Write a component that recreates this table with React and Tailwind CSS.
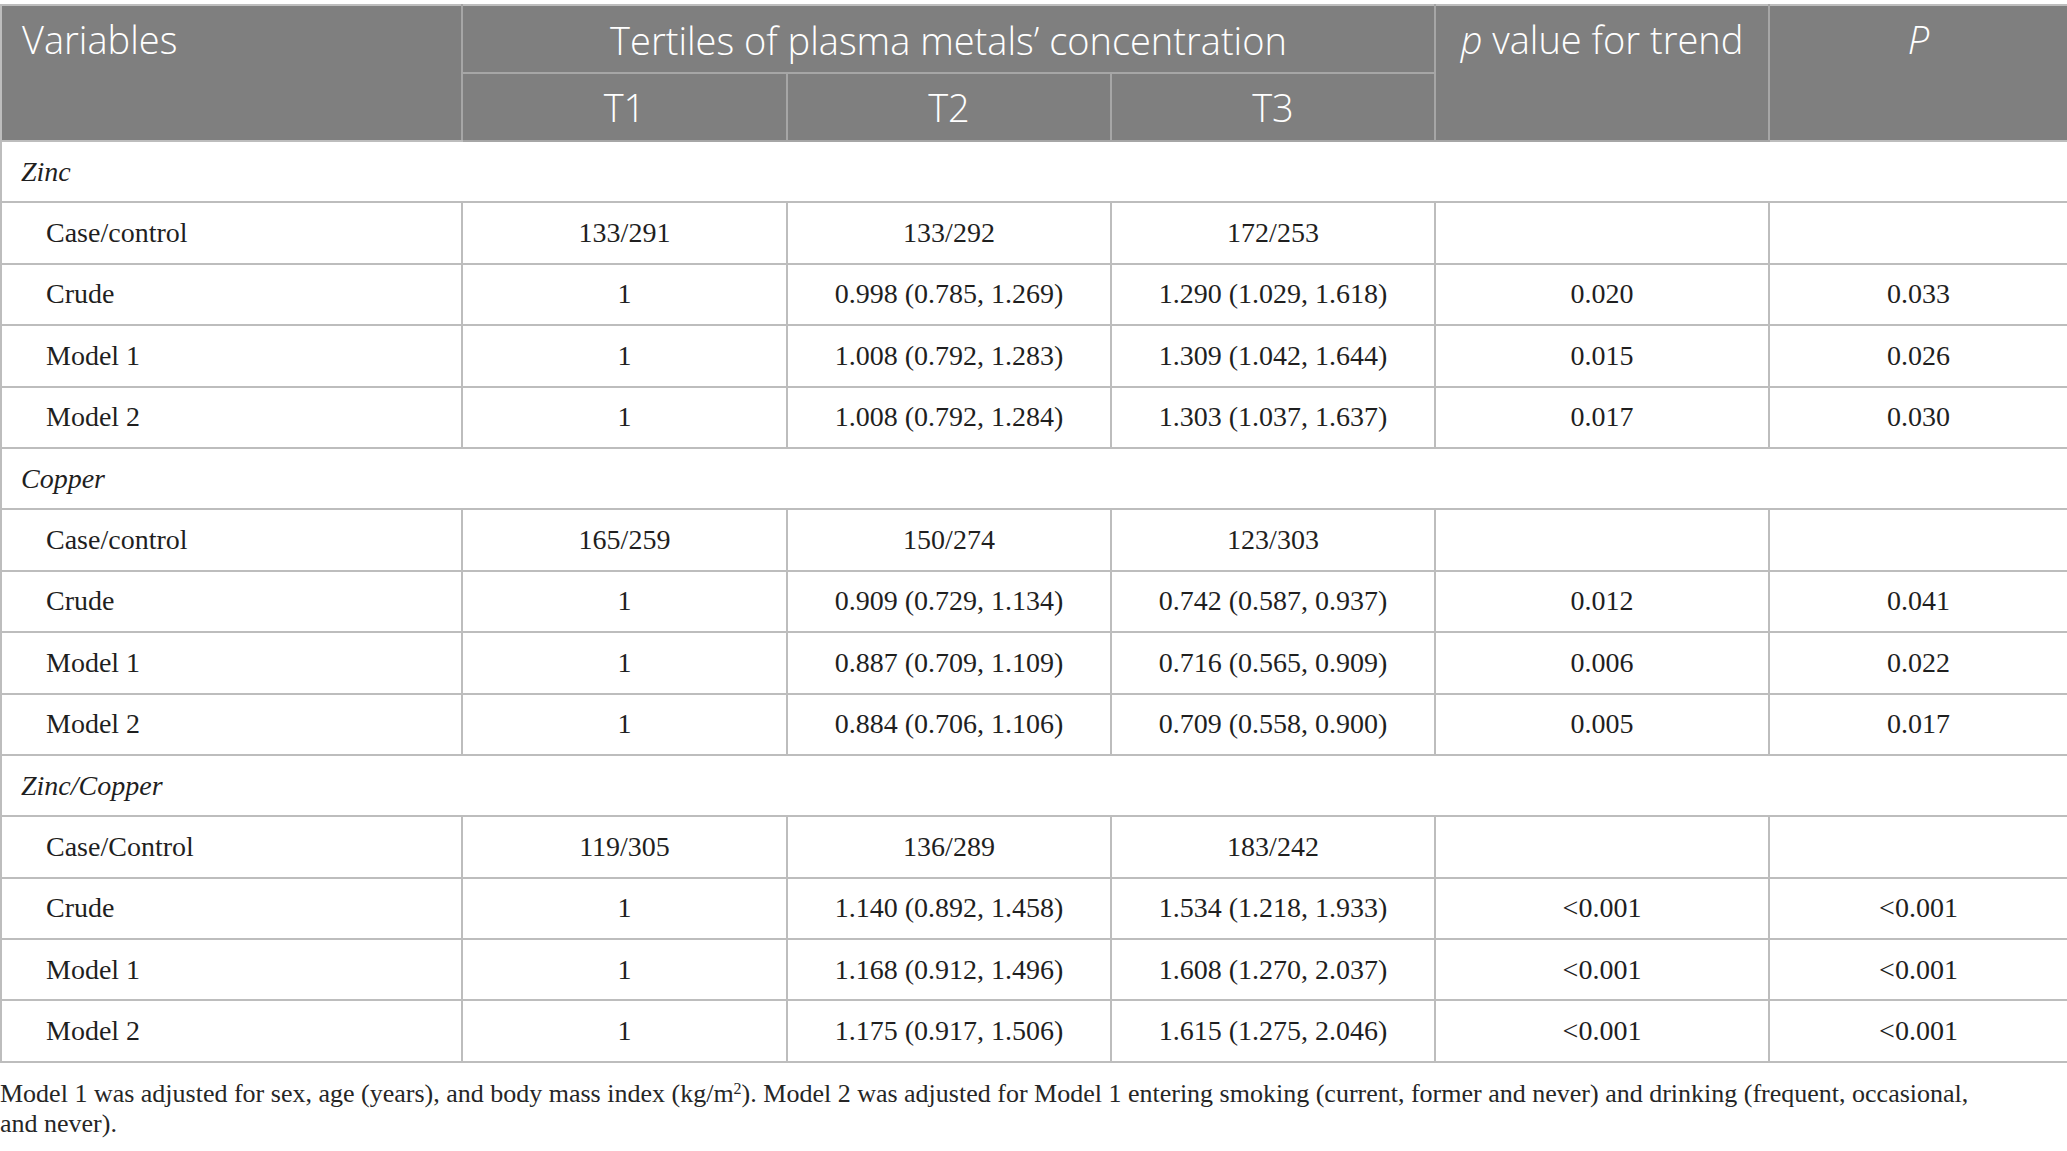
import React from 'react';

const sections = [
  {
    name: 'Zinc',
    rows: [
      ['Case/control', '133/291', '133/292', '172/253', '', ''],
      ['Crude', '1', '0.998 (0.785, 1.269)', '1.290 (1.029, 1.618)', '0.020', '0.033'],
      ['Model 1', '1', '1.008 (0.792, 1.283)', '1.309 (1.042, 1.644)', '0.015', '0.026'],
      ['Model 2', '1', '1.008 (0.792, 1.284)', '1.303 (1.037, 1.637)', '0.017', '0.030'],
    ],
  },
  {
    name: 'Copper',
    rows: [
      ['Case/control', '165/259', '150/274', '123/303', '', ''],
      ['Crude', '1', '0.909 (0.729, 1.134)', '0.742 (0.587, 0.937)', '0.012', '0.041'],
      ['Model 1', '1', '0.887 (0.709, 1.109)', '0.716 (0.565, 0.909)', '0.006', '0.022'],
      ['Model 2', '1', '0.884 (0.706, 1.106)', '0.709 (0.558, 0.900)', '0.005', '0.017'],
    ],
  },
  {
    name: 'Zinc/Copper',
    rows: [
      ['Case/Control', '119/305', '136/289', '183/242', '', ''],
      ['Crude', '1', '1.140 (0.892, 1.458)', '1.534 (1.218, 1.933)', '<0.001', '<0.001'],
      ['Model 1', '1', '1.168 (0.912, 1.496)', '1.608 (1.270, 2.037)', '<0.001', '<0.001'],
      ['Model 2', '1', '1.175 (0.917, 1.506)', '1.615 (1.275, 2.046)', '<0.001', '<0.001'],
    ],
  },
];

const sans = "font-['Open_Sans',_'Noto_Sans',_sans-serif]";
const serif = "font-['Liberation_Serif',_'Times_New_Roman',_serif]";

export default function App() {
  return (
    <div className="w-[2067px] bg-white pt-[4px] text-[#1f1f1f]">
      <table className="w-[2067px] table-fixed border-collapse">
        <colgroup>
          <col className="w-[461px]" />
          <col className="w-[325px]" />
          <col className="w-[324px]" />
          <col className="w-[324px]" />
          <col className="w-[334px]" />
          <col className="w-[299px]" />
        </colgroup>
        <thead className={`${sans} bg-[#7f7f7f] text-[38px] leading-[44px] text-white`}>
          <tr className="h-[68px]">
            <th rowSpan={2} className="border-2 border-[#bdbdbd] border-r-[#a6a6a6] pl-[20px] pt-[11px] text-left align-top font-light">
              Variables
            </th>
            <th colSpan={3} className="border-2 border-[#a6a6a6] border-t-[#bdbdbd] pt-[2px] text-center font-light">
              Tertiles of plasma metals’ concentration
            </th>
            <th rowSpan={2} className="border-2 border-[#a6a6a6] border-t-[#bdbdbd] pt-[11px] text-center align-top font-light">
              <span className="italic">p</span> value for trend
            </th>
            <th rowSpan={2} className="border-2 border-[#bdbdbd] border-l-[#a6a6a6] pt-[11px] text-center align-top font-light">
              <span className="italic">P</span>
            </th>
          </tr>
          <tr className="h-[68px]">
            <th className="border-2 border-[#a6a6a6] text-center font-light">T1</th>
            <th className="border-2 border-[#a6a6a6] text-center font-light">T2</th>
            <th className="border-2 border-[#a6a6a6] text-center font-light">T3</th>
          </tr>
        </thead>
        <tbody className={`${serif} text-[28px]`}>
          {sections.map((s) => (
            <React.Fragment key={s.name}>
              <tr className="h-[61.4px]">
                <td colSpan={6} className="border-2 border-[#bdbdbd] pl-[19px] italic">
                  {s.name}
                </td>
              </tr>
              {s.rows.map((r, i) => (
                <tr key={i} className="h-[61.4px]">
                  <td className="border-2 border-[#bdbdbd] pl-[44px] text-left">{r[0]}</td>
                  {r.slice(1).map((c, j) => (
                    <td key={j} className="border-2 border-[#bdbdbd] text-center">
                      {c}
                    </td>
                  ))}
                </tr>
              ))}
            </React.Fragment>
          ))}
        </tbody>
      </table>
      <p className={`${serif} mt-[16px] text-[26px] leading-[30px] text-[#262626]`}>
        Model 1 was adjusted for sex, age (years), and body mass index (kg/m<sup className="text-[16px]">2</sup>). Model 2 was adjusted for Model 1 entering smoking (current, former and never) and drinking (frequent, occasional,
        <br />
        and never).
      </p>
    </div>
  );
}
